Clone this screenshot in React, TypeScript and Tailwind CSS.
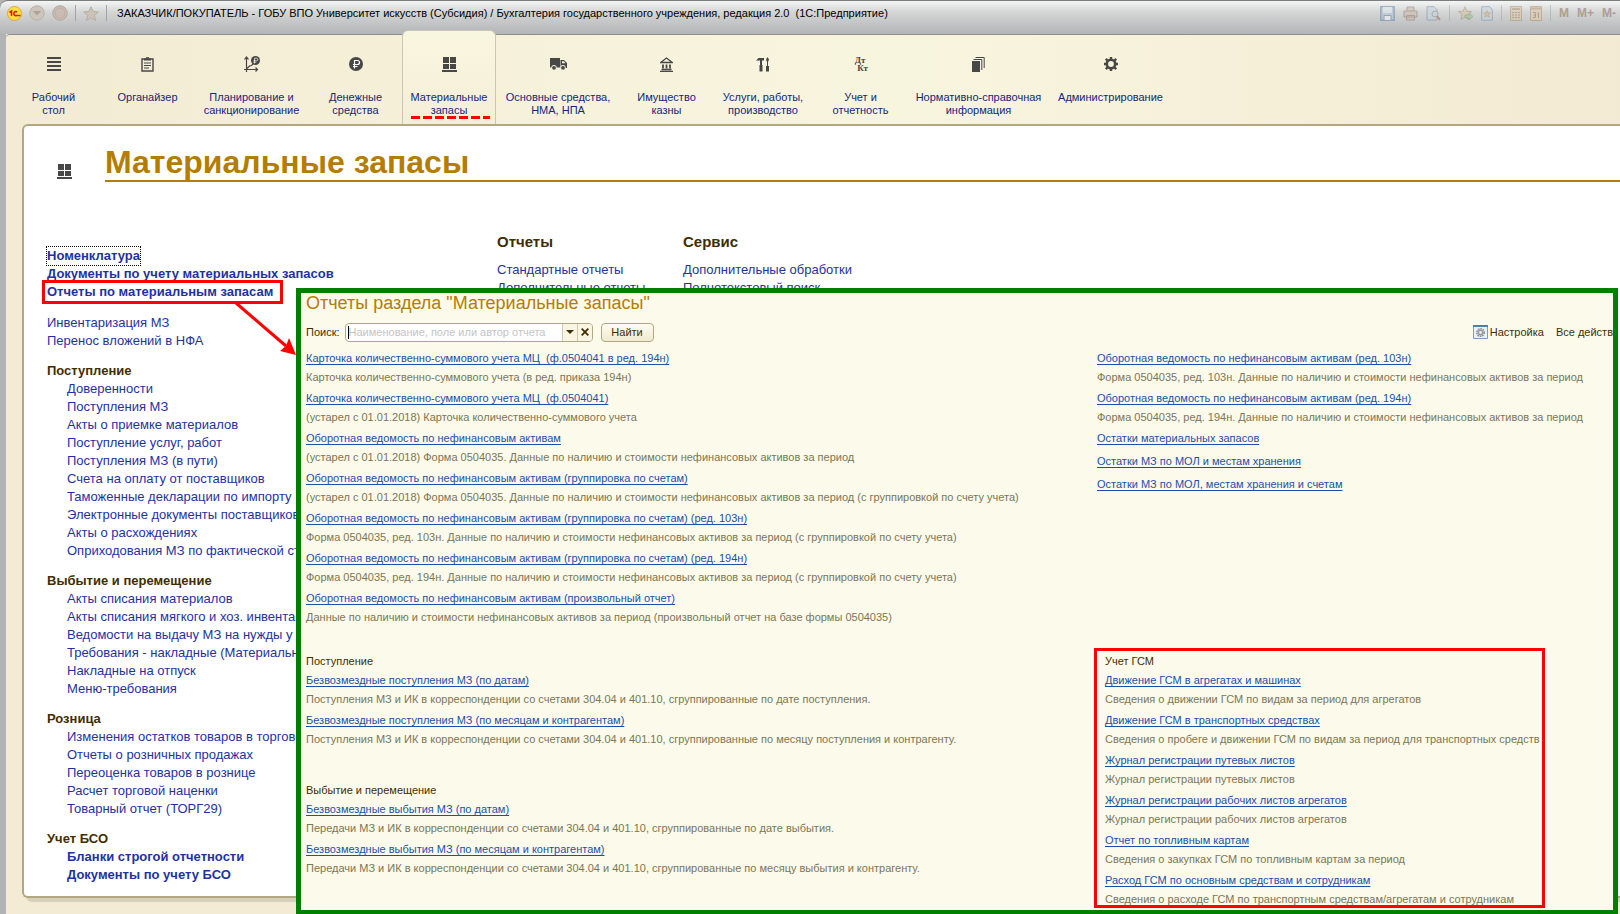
import React from "react";

type NavItem = { lines: string[]; width: string; icon: React.ReactNode; active?: boolean };
type Report = { title: string; note?: string };

const G = "#474747";

const WindowIcon = () => (
  <svg width="15" height="15" viewBox="0 0 15 15" fill={G}>
    <path d="M1 0h6v6H1zM8 0h6v6H8zM1 7h6v5H1zM8 7h6v5H8zM0 13h15v2H0z" />
  </svg>
);

const navItems: NavItem[] = [
  {
    lines: ["Рабочий", "стол"],
    width: "w-[95px]",
    icon: (
      <svg width="14" height="14" viewBox="0 0 14 14" fill={G}>
        <path d="M0 0h14v2H0zM0 4h14v2H0zM0 8h14v2H0zM0 12h14v2H0z" />
      </svg>
    ),
  },
  {
    lines: ["Органайзер"],
    width: "w-[93px]",
    icon: (
      <svg width="13" height="15" viewBox="0 0 13 15" fill="none" stroke={G}>
        <path d="M1 2h11v12H1z" strokeWidth="1.4" />
        <path d="M3 2.500h7" strokeWidth="2" />
        <path d="M5 .7h3" />
        <path d="M3 6h7M3 8.500h7M3 11h5" />
      </svg>
    ),
  },
  {
    lines: ["Планирование и", "санкционирование"],
    width: "w-[115px]",
    icon: (
      <svg width="16" height="16" viewBox="0 0 16 16" fill="none" stroke={G}>
        <path d="M2.500 1v15M.5 3.500l2-2.500 2 2.500M0 13.500h14M11.500 11.500l2 2-2 2M3 12.500l2.500-2.500 2-.5 2.500-2.500" strokeWidth="1.200" />
        <circle cx="11.500" cy="4.500" r="4.500" fill={G} stroke="none" />
        <path d="M10.500 7.500V2.200h2a1.200 1.200 0 010 2.600h-3M9.200 6.200h3" stroke="#f5eed8" strokeWidth=".8" />
      </svg>
    ),
  },
  {
    lines: ["Денежные", "средства"],
    width: "w-[93px]",
    icon: (
      <svg width="14" height="14" viewBox="0 0 14 14" fill="none">
        <circle cx="7" cy="7" r="7" fill={G} />
        <path d="M5.500 11.500V3.500h3a2 2 0 010 4H4M4 9.500h4.500" stroke="#fff" strokeWidth="1.200" />
      </svg>
    ),
  },
  { lines: ["Материальные", "запасы"], width: "w-[94px]", active: true, icon: <WindowIcon /> },
  {
    lines: ["Основные средства,", "НМА, НПА"],
    width: "w-[124px]",
    icon: (
      <svg width="17" height="12" viewBox="0 0 17 12" fill={G}>
        <path d="M0 0h10v9.500H0zM10.500 2H14l3 3v5h-6.500z" />
        <path d="M12 3.200h2l1.500 2H12z" fill="#f5eed8" />
        <circle cx="4" cy="9.700" r="2.700" fill="#f5eed8" />
        <circle cx="13" cy="9.700" r="2.700" fill="#f5eed8" />
        <circle cx="4" cy="9.800" r="1.900" />
        <circle cx="13" cy="9.800" r="1.900" />
      </svg>
    ),
  },
  {
    lines: ["Имущество", "казны"],
    width: "w-[93px]",
    icon: (
      <svg width="13" height="15" viewBox="0 0 13 15" fill="none" stroke={G}>
        <path d="M.7 5.500L6.500 1l5.800 4.500z" strokeWidth="1.300" />
        <path d="M3 7.500v4M6.500 7.500v4M10 7.500v4" strokeWidth="1.800" />
        <path d="M1.500 12.500h10M0 14.300h13" strokeWidth="1.300" />
      </svg>
    ),
  },
  {
    lines: ["Услуги, работы,", "производство"],
    width: "w-[100px]",
    icon: (
      <svg width="14" height="15" viewBox="0 0 14 15" fill={G}>
        <path d="M0 3.500L2.500 1H8v2.500H6V8h.5v6.500h-3V8H4V3.500z" />
        <path d="M11.500 0L13 2.500 12 5v4h1v5.500h-3V9h1V5l-1-2.500z" />
      </svg>
    ),
  },
  {
    lines: ["Учет и", "отчетность"],
    width: "w-[95px]",
    icon: (
      <span className="flex w-[15px] flex-col font-['Liberation_Serif',serif] text-[9px] leading-[8px] font-bold text-[#474747]">
        <span className="-ml-px">Дт</span>
        <span className="ml-1">Кт</span>
      </span>
    ),
  },
  {
    lines: ["Нормативно-справочная", "информация"],
    width: "w-[141px]",
    icon: (
      <svg width="13" height="15" viewBox="0 0 13 15" fill="none" stroke={G}>
        <path d="M0 4h8v11H0z" fill={G} stroke="none" />
        <path d="M1.500 2.500h8.300V13M3.500.5h8.700V11" />
      </svg>
    ),
  },
  {
    lines: ["Администрирование"],
    width: "w-[123px]",
    icon: (
      <svg width="14" height="14" viewBox="0 0 14 14" fill="none" stroke={G}>
        <circle cx="7" cy="7" r="4.200" strokeWidth="2.600" />
        <path d="M7 0v2M7 12v2M0 7h2M12 7h2M1.800 1.800l1.500 1.500M10.700 10.700l1.500 1.500M1.800 12.200l1.500-1.500M10.700 3.300l1.500-1.500" strokeWidth="2.400" />
      </svg>
    ),
  },
];

const sections: { title: string; bold?: boolean; items: string[] }[] = [
  {
    title: "Поступление",
    items: [
      "Доверенности",
      "Поступления МЗ",
      "Акты о приемке материалов",
      "Поступление услуг, работ",
      "Поступления МЗ (в пути)",
      "Счета на оплату от поставщиков",
      "Таможенные декларации по импорту",
      "Электронные документы поставщиков",
      "Акты о расхождениях",
      "Оприходования МЗ по фактической ст",
    ],
  },
  {
    title: "Выбытие и перемещение",
    items: [
      "Акты списания материалов",
      "Акты списания мягкого и хоз. инвента",
      "Ведомости на выдачу МЗ на нужды у",
      "Требования - накладные (Материальны",
      "Накладные на отпуск",
      "Меню-требования",
    ],
  },
  {
    title: "Розница",
    items: [
      "Изменения остатков товаров в торгово",
      "Отчеты о розничных продажах",
      "Переоценка товаров в рознице",
      "Расчет торговой наценки",
      "Товарный отчет (ТОРГ29)",
    ],
  },
  { title: "Учет БСО", bold: true, items: ["Бланки строгой отчетности", "Документы по учету БСО"] },
];

const mainReports: Report[] = [
  { title: "Карточка количественно-суммового учета МЦ  (ф.0504041 в ред. 194н)", note: "Карточка количественно-суммового учета (в ред. приказа 194н)" },
  { title: "Карточка количественно-суммового учета МЦ  (ф.0504041)", note: "(устарел с 01.01.2018) Карточка количественно-суммового учета" },
  { title: "Оборотная ведомость по нефинансовым активам", note: "(устарел с 01.01.2018) Форма 0504035. Данные по наличию и стоимости нефинансовых активов за период" },
  { title: "Оборотная ведомость по нефинансовым активам (группировка по счетам)", note: "(устарел с 01.01.2018) Форма 0504035. Данные по наличию и стоимости нефинансовых активов за период (с группировкой по счету учета)" },
  { title: "Оборотная ведомость по нефинансовым активам (группировка по счетам) (ред. 103н)", note: "Форма 0504035, ред. 103н. Данные по наличию и стоимости нефинансовых активов за период (с группировкой по счету учета)" },
  { title: "Оборотная ведомость по нефинансовым активам (группировка по счетам) (ред. 194н)", note: "Форма 0504035, ред. 194н. Данные по наличию и стоимости нефинансовых активов за период (с группировкой по счету учета)" },
  { title: "Оборотная ведомость по нефинансовым активам (произвольный отчет)", note: "Данные по наличию и стоимости нефинансовых активов за период (произвольный отчет на базе формы 0504035)" },
];

const sideReports: Report[] = [
  { title: "Оборотная ведомость по нефинансовым активам (ред. 103н)", note: "Форма 0504035, ред. 103н. Данные по наличию и стоимости нефинансовых активов за период" },
  { title: "Оборотная ведомость по нефинансовым активам (ред. 194н)", note: "Форма 0504035, ред. 194н. Данные по наличию и стоимости нефинансовых активов за период" },
  { title: "Остатки материальных запасов" },
  { title: "Остатки МЗ по МОЛ и местам хранения" },
  { title: "Остатки МЗ по МОЛ, местам хранения и счетам" },
];

const incomeReports: Report[] = [
  { title: "Безвозмездные поступления МЗ (по датам)", note: "Поступления МЗ и ИК в корреспонденции со счетами 304.04 и 401.10, сгруппированные по дате поступления." },
  { title: "Безвозмездные поступления МЗ (по месяцам и контрагентам)", note: "Поступления МЗ и ИК в корреспонденции со счетами 304.04 и 401.10, сгруппированные по месяцу поступления и контрагенту." },
];

const disposalReports: Report[] = [
  { title: "Безвозмездные выбытия МЗ (по датам)", note: "Передачи МЗ и ИК в корреспонденции со счетами 304.04 и 401.10, сгруппированные по дате выбытия." },
  { title: "Безвозмездные выбытия МЗ (по месяцам и контрагентам)", note: "Передачи МЗ и ИК в корреспонденции со счетами 304.04 и 401.10, сгруппированные по месяцу выбытия и контрагенту." },
];

const fuelReports: Report[] = [
  { title: "Движение ГСМ в агрегатах и машинах", note: "Сведения о движении ГСМ по видам за период для агрегатов" },
  { title: "Движение ГСМ в транспортных средствах", note: "Сведения о пробеге и движении ГСМ по видам за период для транспортных средств" },
  { title: "Журнал регистрации путевых листов", note: "Журнал регистрации путевых листов" },
  { title: "Журнал регистрации рабочих листов агрегатов", note: "Журнал регистрации рабочих листов агрегатов" },
  { title: "Отчет по топливным картам", note: "Сведения о закупках ГСМ по топливным картам за период" },
  { title: "Расход ГСМ по основным средствам и сотрудникам", note: "Сведения о расходе ГСМ по транспортным средствам/агрегатам и сотрудникам" },
];

function Reports({ heading, items }: { heading?: string; items: Report[] }) {
  return (
    <div className="whitespace-pre">
      {heading && <h3 className="leading-[18px] text-[#3f2e00]">{heading}</h3>}
      <ul>
        {items.map((r) => (
          <li key={r.title} className={r.note ? "mb-0.5" : "mb-[3px]"}>
            <a href="#" className="block w-fit leading-5 text-[#1a50ab] underline underline-offset-2">
              {r.title}
            </a>
            {r.note && <p className="leading-[18px] text-[#7a7755]">{r.note}</p>}
          </li>
        ))}
      </ul>
    </div>
  );
}

const Sep = () => <span className="h-4 w-px bg-[#a3a3a3]" />;

function TitleBar() {
  return (
    <header className="flex h-[34px] items-start rounded-tl-lg border-t border-[#7d7d7d] bg-linear-to-b from-[#f4f6f6] via-[#d3d4d4] via-35% to-[#b4b5b7] pt-1 pr-1 pl-[7px] text-[11px] text-black">
      <div className="flex h-4 items-center gap-[7px]">
        <svg width="15" height="15" viewBox="0 0 15 15">
          <circle cx="7.500" cy="7.500" r="7" fill="#ffdf3c" stroke="#e0a050" />
          <path d="M2.500 6.500L4.500 5v5M10 6a2 2 0 10-.5 3.500h4" fill="none" stroke="#d8210e" strokeWidth="1.600" />
        </svg>
        <svg width="16" height="16" viewBox="0 0 16 16">
          <circle cx="8" cy="8" r="7.200" fill="#cdc4ba" stroke="#bab0a8" />
          <path d="M4 6h8l-4 4.500z" fill="#aba39b" />
        </svg>
        <svg width="16" height="16" viewBox="0 0 16 16">
          <circle cx="8" cy="8" r="7.200" fill="#c9bbb0" stroke="#b3a8a0" />
          <circle cx="8" cy="8" r="4.800" fill="#c9bdb3" stroke="#bcb0a8" />
        </svg>
        <Sep />
        <svg width="16" height="15" viewBox="0 0 16 15">
          <path d="M8 .8l2.100 4.700 5.200.5-3.900 3.500 1.200 5L8 11.900 3.400 14.500l1.200-5L.7 6l5.200-.5z" fill="#cbc2b8" stroke="#b7aca2" />
        </svg>
        <Sep />
      </div>
      <h1 className="ml-2.5 leading-[17px] whitespace-pre">
        ЗАКАЗЧИК/ПОКУПАТЕЛЬ - ГОБУ ВПО Университет искусств (Субсидия) / Бухгалтерия государственного учреждения, редакция 2.0  (1С:Предприятие)
      </h1>
      <div className="ml-auto flex h-4 items-center gap-2 opacity-50">
        <svg width="15" height="15" viewBox="0 0 15 15" fill="none" stroke="#5b7ea3">
          <path d="M.8.8h13.400v13.400H.8z" fill="#a9c1d8" strokeWidth="1.500" />
          <path d="M3 1h9v6H3z" fill="#dfe8ef" stroke="none" />
          <path d="M4 14V9.500h7V14" fill="#fff" />
        </svg>
        <svg width="15" height="15" viewBox="0 0 15 15" stroke="#8b7468" fill="#cbb8a9">
          <path d="M4 5V1h7v4M1 5h13v6H1zM3.500 9.500h8V14h-8z" />
        </svg>
        <svg width="15" height="15" viewBox="0 0 15 15" stroke="#7089a5" fill="#c5d2de">
          <path d="M1 .7h7l3 3V14H1z" />
          <circle cx="9" cy="8" r="3" />
          <path d="M11 10l3 4" stroke="#9a5c3c" strokeWidth="2" />
        </svg>
        <Sep />
        <svg width="15" height="15" viewBox="0 0 15 15" stroke="#a38c77" fill="#d9c09b">
          <path d="M7 .8l1.800 4.400 4.700.4-3.500 3 1 4.900-4-2.500-4 2.500 1-4.900-3.500-3 4.700-.4z" />
          <path d="M7 9h4V7l4 3.500-4 3.500v-2H7z" fill="#8fc07e" stroke="#62875c" strokeWidth=".7" />
        </svg>
        <svg width="12" height="15" viewBox="0 0 12 15" stroke="#7089a5" fill="#c5d2de">
          <path d="M.7.700h8l2.600 3v10.500H.7z" />
          <path d="M6 4.500l1 2.300 2.500.2-2 1.600.8 2.600L6 9.800l-2.300 1.400.8-2.600-2-1.600L5 6.800z" fill="#d6a96b" stroke="#a9834f" strokeWidth=".6" />
        </svg>
        <Sep />
        <svg width="12" height="15" viewBox="0 0 12 15" fill="#e0c79b" stroke="#a58c69">
          <path d="M.5.5h11v14H.5z" />
          <path d="M2 3h8" strokeWidth="2" />
          <path d="M2 6.500h8M2 9h8M2 11.500h8" stroke="#8a775e" strokeDasharray="2 1" />
        </svg>
        <svg width="12" height="15" viewBox="0 0 12 15" fill="#e0c8a4" stroke="#b08b62">
          <path d="M.5.5h11v14H.5z" />
          <path d="M1 2.500h10" strokeWidth="2" />
          <path d="M3 6.500h2.500v2.500H3.500M5.500 9v2.500H3M8.500 12V6.500L7.500 7.500" fill="none" stroke="#8d7156" />
        </svg>
        <Sep />
        <span className="flex gap-2 text-[12px] leading-4 font-bold text-[#8a6653]">
          <span>M</span>
          <span>M+</span>
          <span>M-</span>
        </span>
      </div>
    </header>
  );
}

function SectionNav() {
  return (
    <nav className="flex h-[90px] rounded-tl border-t border-[#8e8e90] bg-linear-to-r from-[#f3ebd4] via-[#f8f5df] via-55% to-[#f3ead3]">
      {navItems.map((n) => (
        <button
          key={n.lines[0]}
          className={`${n.width} relative flex shrink-0 flex-col items-center text-center text-[11px] leading-[13px] whitespace-nowrap text-[#15267c] ${
            n.active ? "-mt-[5px] rounded-t-md border-x border-t border-[#c9c6b4] bg-linear-to-b from-[#f9f6e0] to-[#f5eed8] pt-[4px]" : ""
          }`}
        >
          <span className="mt-5 flex h-[18px] items-center">{n.icon}</span>
          <span className="mt-[18px]">
            {n.lines.map((l) => (
              <span key={l} className="block">
                {l}
              </span>
            ))}
          </span>
          {n.active && (
            <svg className="absolute bottom-[5px] left-2 h-[3px] w-[79px]" viewBox="0 0 79 3">
              <path d="M0 1.500h79" stroke="#f00" strokeWidth="3" strokeDasharray="9 3" />
            </svg>
          )}
        </button>
      ))}
    </nav>
  );
}

const navLink = "block w-fit leading-[18px] text-[#1e32a4]";

function SectionPage() {
  return (
    <main className="ml-4 rounded-l-md border-2 border-r-0 border-[#b1a883] bg-white pb-3 text-[13px] whitespace-nowrap shadow-[4px_4px_0_#d6d0bb]">
      <div className="flex items-start pt-[18px]">
        <span className="mt-5 ml-[33px] w-[48px]">
          <WindowIcon />
        </span>
        <h2 className="flex-1 border-b-2 border-[#b47d00] text-[32px] leading-9 font-bold text-[#b47d00]">Материальные запасы</h2>
      </div>
      <div className="flex pt-[49px] pl-[23px]">
        <div className="w-[450px] pt-4">
          <a href="#" className={`${navLink} font-bold outline-1 outline-black outline-dotted`}>
            Номенклатура
          </a>
          <a href="#" className={`${navLink} font-bold`}>
            Документы по учету материальных запасов
          </a>
          <a href="#" className={`${navLink} relative font-bold`}>
            Отчеты по материальным запасам
            <span className="absolute -inset-y-[3px] -right-2.5 -left-[5px] border-3 border-[#f00]" />
          </a>
          <div className="mt-[13px]">
            <a href="#" className={navLink}>
              Инвентаризация МЗ
            </a>
            <a href="#" className={navLink}>
              Перенос вложений в НФА
            </a>
          </div>
          {sections.map((s) => (
            <section key={s.title} className="mt-3">
              <h3 className="leading-[18px] font-bold text-[#3f2e00]">{s.title}</h3>
              <ul className="pl-5">
                {s.items.map((i) => (
                  <li key={i}>
                    <a href="#" className={s.bold ? `${navLink} font-bold` : navLink}>
                      {i}
                    </a>
                  </li>
                ))}
              </ul>
            </section>
          ))}
        </div>
        <div className="w-[186px]">
          <h3 className="text-[15px] leading-[22px] font-bold text-[#3f2e00]">Отчеты</h3>
          <div className="mt-2">
            <a href="#" className={navLink}>
              Стандартные отчеты
            </a>
            <a href="#" className={navLink}>
              Дополнительные отчеты
            </a>
          </div>
        </div>
        <div>
          <h3 className="text-[15px] leading-[22px] font-bold text-[#3f2e00]">Сервис</h3>
          <div className="mt-2">
            <a href="#" className={navLink}>
              Дополнительные обработки
            </a>
            <a href="#" className={navLink}>
              Полнотекстовый поиск
            </a>
          </div>
        </div>
      </div>
    </main>
  );
}

function ReportsPanel() {
  return (
    <section className="absolute top-[288px] right-0.5 bottom-0 left-[296px] overflow-hidden border-[5px] border-b-4 border-[#008000] bg-[#fcfaeb] text-[11px] whitespace-nowrap text-[#3f2e00]">
      <h2 className="pl-[5px] text-[18px] leading-5 text-[#b47d00]">Отчеты раздела "Материальные запасы"</h2>
      <div className="mt-[9px] flex h-5 items-center pl-[5px]">
        <label htmlFor="search">Поиск:</label>
        <div className="ml-[5px] flex h-[19px] w-[248px] items-stretch overflow-hidden rounded border border-[#b1a883] bg-white">
          <span className="my-0.5 ml-0.5 w-px bg-black" />
          <input id="search" type="text" placeholder="Наименование, поле или автор отчета" className="min-w-0 flex-1 outline-none placeholder:text-[#c4c4c4]" />
          <button aria-label="Выбрать" className="flex w-[15px] items-center justify-center border-l border-[#cfc9ae] bg-[#f8f5e2]">
            <svg width="8" height="4" viewBox="0 0 8 4">
              <path d="M0 0h8L4 4z" fill="#3f2e00" />
            </svg>
          </button>
          <button aria-label="Очистить" className="flex w-[15px] items-center justify-center border-l border-[#cfc9ae] bg-[#f8f5e2]">
            <svg width="8" height="8" viewBox="0 0 8 8">
              <path d="M.7.700l6.600 6.600M7.300.7L.7 7.300" stroke="#3f2e00" strokeWidth="1.800" />
            </svg>
          </button>
        </div>
        <button className="ml-2 h-[19px] w-[53px] rounded border border-[#b1a883] bg-linear-to-b from-[#fdfcf3] to-[#efe9cd]">Найти</button>
        <div className="ml-auto flex items-center gap-3">
          <button className="flex items-center gap-0.5">
            <svg width="15" height="14" viewBox="0 0 15 14">
              <path d="M.5.5h14v13H.5z" fill="#e8f1f7" stroke="#7f9fb9" />
              <path d="M0 0h15v2H0z" fill="#4e7fa8" />
              <circle cx="7.500" cy="7.500" r="3.700" fill="none" stroke="#8e8e8e" strokeWidth="1.600" strokeDasharray="1.600 .8" />
              <circle cx="7.500" cy="7.500" r="2.200" fill="none" stroke="#9a9a9a" strokeWidth="1.500" />
            </svg>
            Настройка
          </button>
          <button>Все действ</button>
        </div>
      </div>
      <div className="mt-[6px] grid grid-cols-[793fr_519fr]">
        <div className="pl-[5px]">
          <Reports items={mainReports} />
        </div>
        <div className="pl-[3px]">
          <Reports items={sideReports} />
        </div>
        <div className="mt-6 flex flex-col gap-[31px] pl-[5px]">
          <Reports heading="Поступление" items={incomeReports} />
          <Reports heading="Выбытие и перемещение" items={disposalReports} />
        </div>
        <div className="mt-5 h-[260px] w-[451px] border-3 border-[#f00] pt-px pl-2">
          <Reports heading="Учет ГСМ" items={fuelReports} />
        </div>
      </div>
    </section>
  );
}

export default function App() {
  return (
    <div className="relative min-h-screen overflow-hidden bg-[#b2b3b5] font-['Liberation_Sans',Arial,sans-serif]">
      <TitleBar />
      <div className="ml-1.5 min-h-[880px] bg-[#f3ebd4]">
        <SectionNav />
        <SectionPage />
      </div>
      <ReportsPanel />
      <svg className="absolute top-[300px] left-[232px]" width="66" height="58" viewBox="0 0 66 58">
        <path d="M4 3l50 43" stroke="#f00" strokeWidth="3" />
        <path d="M64 55l-16-4 6-5 3-8z" fill="#f00" />
      </svg>
    </div>
  );
}
